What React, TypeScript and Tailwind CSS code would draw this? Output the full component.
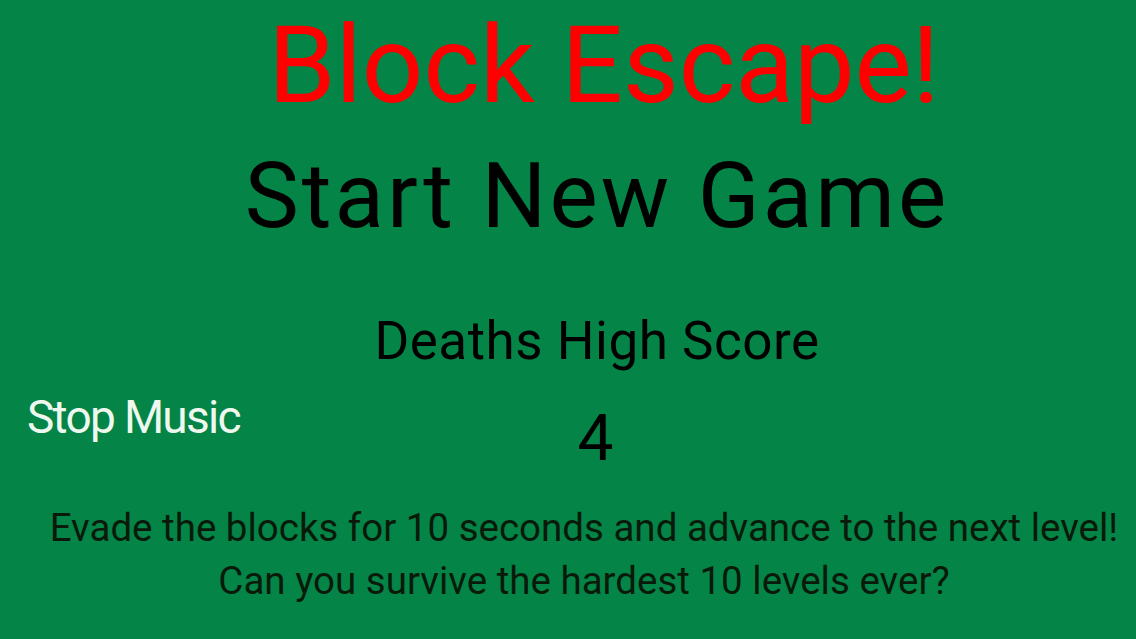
import React from "react";

export default function App() {
  return (
    <div
      className="w-[1136px] h-[639px] overflow-hidden bg-[#048446] flex flex-col"
      style={{ fontFamily: "Roboto, 'Liberation Sans', sans-serif" }}
    >
      <div className="flex flex-col items-center pl-[72px]">
        <div className="text-[108px] leading-[130px] whitespace-nowrap text-[#ff0000]">Block Escape!</div>
      </div>
      <div className="flex flex-col items-center pl-[58px] mt-[21px]">
        <div className="text-[91px] leading-none tracking-[3px] text-black">Start New Game</div>
        <div className="text-[53px] leading-none tracking-[0.5px] text-black mt-[73px]">Deaths High Score</div>
      </div>
      <div className="flex flex-row items-start mt-[26px]">
        <div className="w-[240px] ml-[27px] text-[46px] leading-none tracking-[-1.7px] text-[#eef8ee]">Stop Music</div>
        <div className="flex-1 mr-[212px] flex justify-center">
          <div className="text-[64px] leading-none text-black mt-[13px]">4</div>
        </div>
      </div>
      <div className="flex flex-col items-center pl-[32px] mt-[30px] text-[38.5px] leading-[53px] text-[#0a1a0a]">
        <div>Evade the blocks for 10 seconds and advance to the next level!</div>
        <div>Can you survive the hardest 10 levels ever?</div>
      </div>
    </div>
  );
}
